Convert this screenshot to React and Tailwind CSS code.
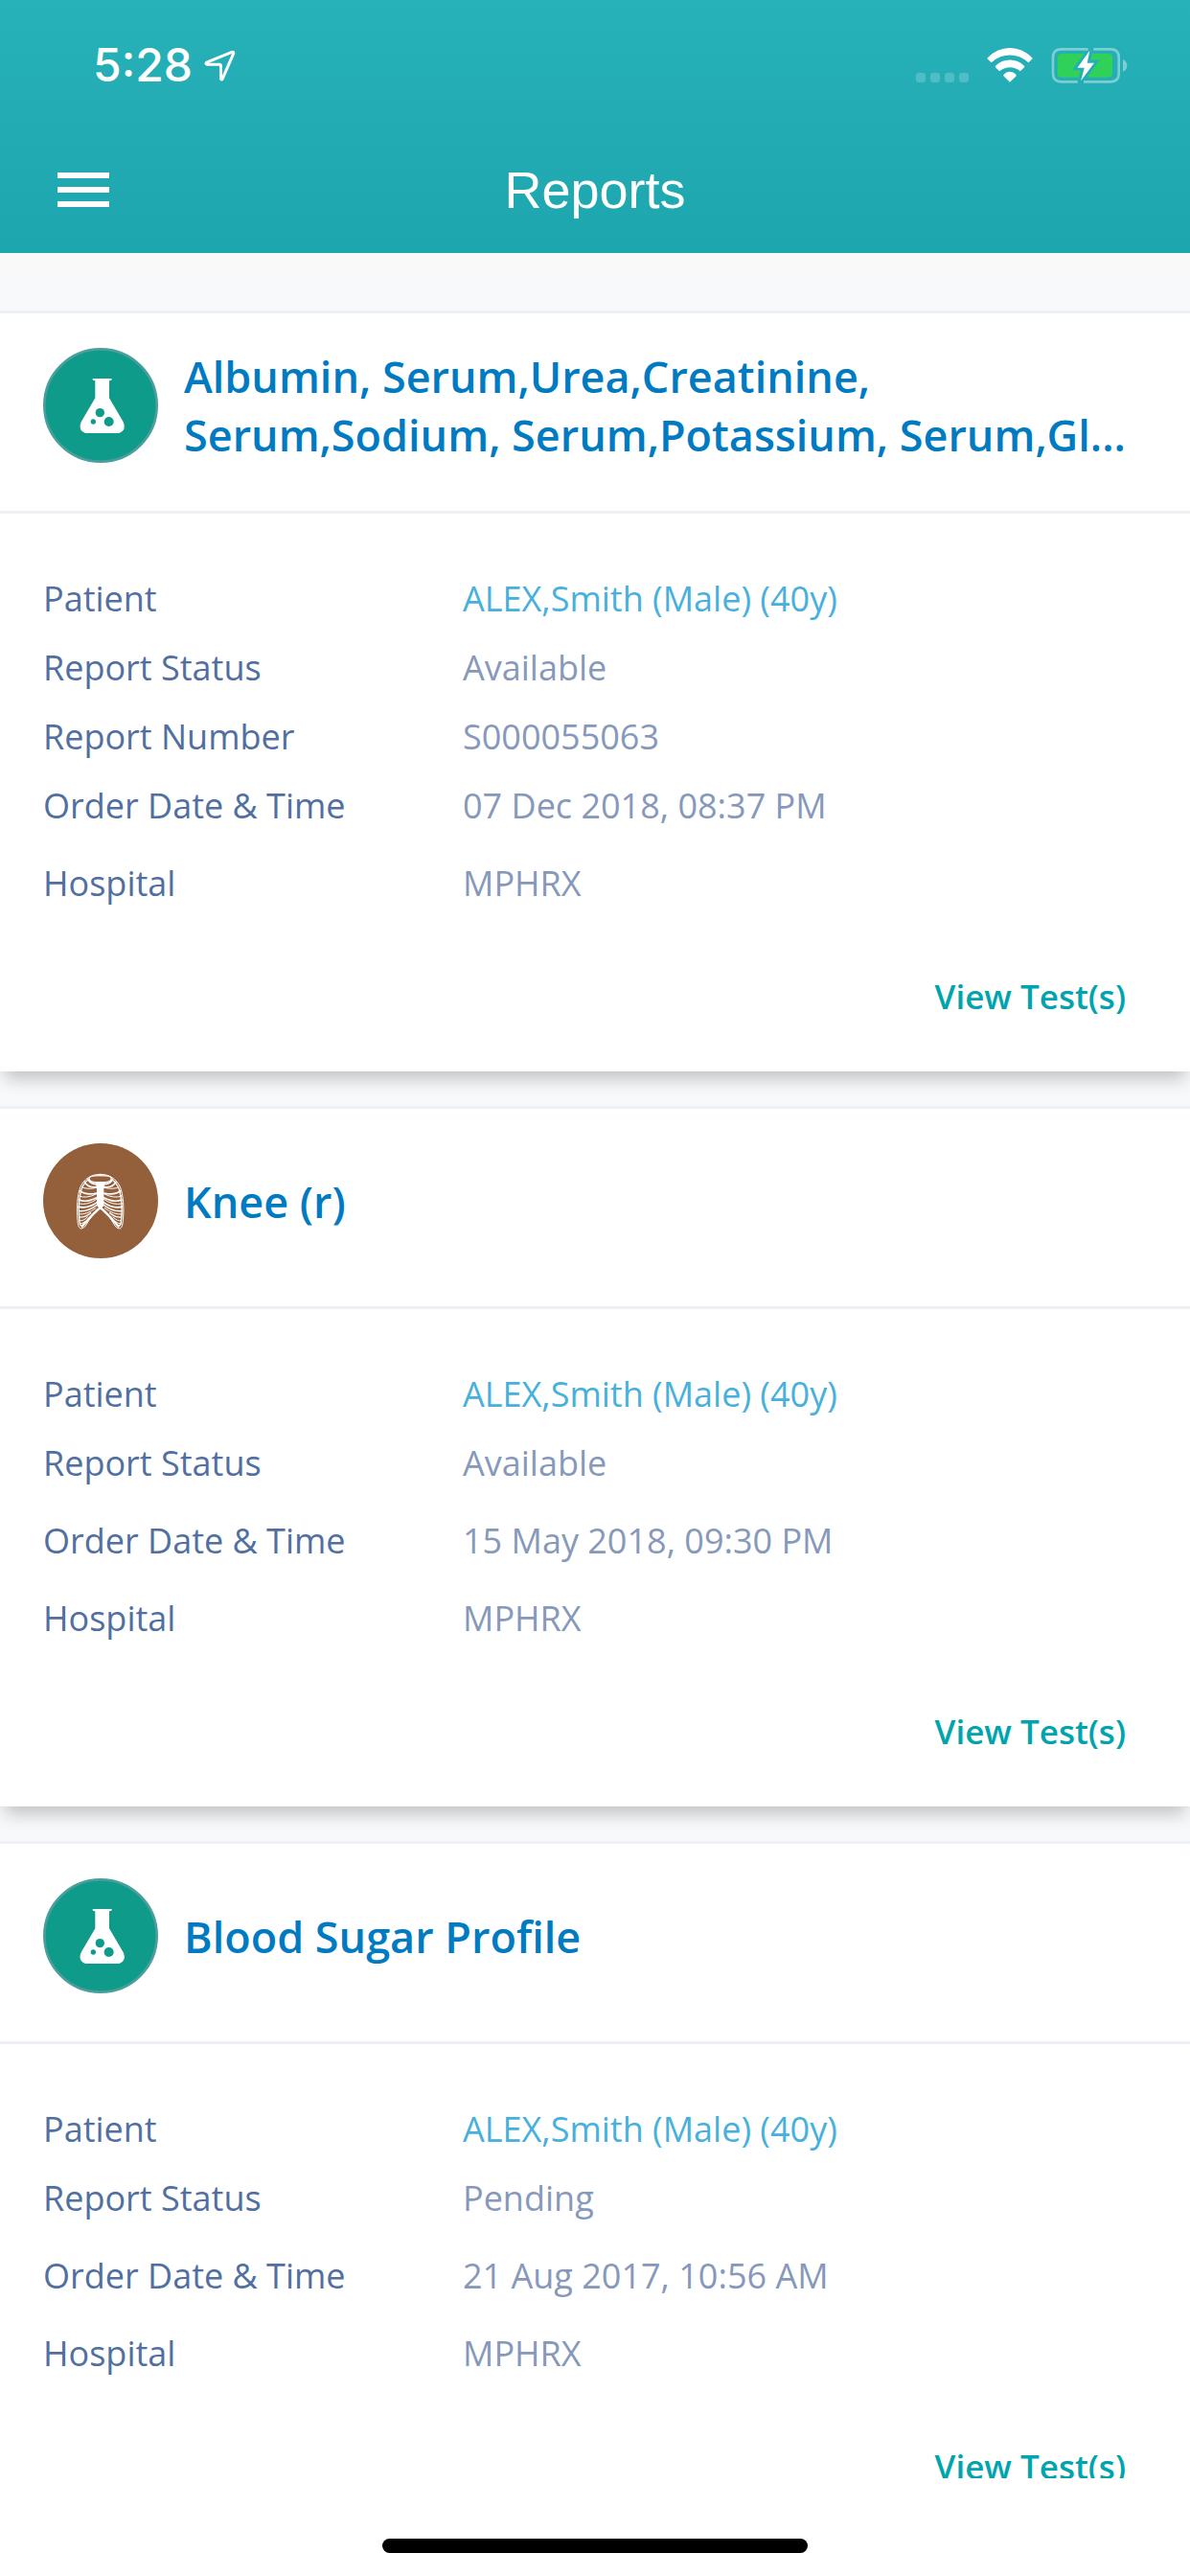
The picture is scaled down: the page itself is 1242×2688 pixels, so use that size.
import clsx from "clsx";

const reports = [
  {
    id: 1,
    type: "lab",
    title: "Albumin, Serum,Urea,Creatinine, Serum,Sodium, Serum,Potassium, Serum,Gl...",
    rows: [
      { label: "Patient", value: "ALEX,Smith (Male) (40y)", highlight: true },
      { label: "Report Status", value: "Available" },
      { label: "Report Number", value: "S000055063" },
      { label: "Order Date & Time", value: "07 Dec 2018, 08:37 PM" },
      { label: "Hospital", value: "MPHRX", spaced: true },
    ],
  },
  {
    id: 2,
    type: "radiology",
    title: "Knee (r)",
    rows: [
      { label: "Patient", value: "ALEX,Smith (Male) (40y)", highlight: true },
      { label: "Report Status", value: "Available" },
      { label: "Order Date & Time", value: "15 May 2018, 09:30 PM", spaced: true },
      { label: "Hospital", value: "MPHRX", spaced: true },
    ],
  },
  {
    id: 3,
    type: "lab",
    title: "Blood Sugar Profile",
    rows: [
      { label: "Patient", value: "ALEX,Smith (Male) (40y)", highlight: true },
      { label: "Report Status", value: "Pending" },
      { label: "Order Date & Time", value: "21 Aug 2017, 10:56 AM", spaced: true },
      { label: "Hospital", value: "MPHRX", spaced: true },
    ],
  },
];

const LocationIcon = () => (
  <svg viewBox="638 153 100 100" className="w-[33px] h-[33px]" fill="none" stroke="#fff" strokeWidth="9" strokeLinejoin="round">
    <path d="M646 193 L726 160 Q732 158 731 165 L696 245 Q692 249 691 243 V204 Q691 199 686 199 H647 Q641 197 646 193 Z" />
  </svg>
);

const WifiIcon = () => (
  <svg viewBox="395 147 143 109" className="w-12 h-9" fill="#fff">
    <path d="M396 178 Q427 147 466.500 147 T537 178 Q539 180 537 182 L527 192 Q525 194 523 192 Q498 170 466.500 170 T410 192 Q408 194 406 192 L396 182 Q394 180 396 178 Z" />
    <path d="M421 204 Q440 185 466.500 185 T512 204 Q514 206 512 208 L501 219 Q499 221 497 219 Q484 208 466.500 208 T436 219 Q434 221 432 219 L421 208 Q419 206 421 204 Z" />
    <path d="M447 231 Q455 222 466.500 222 T486 231 Q488 234 486 236 L468 254 Q466.500 256 465 254 L447 236 Q445 234 447 231 Z" />
  </svg>
);

const BatteryIcon = () => (
  <svg viewBox="594 147 238 112" className="w-20 h-[37px]" fill="none">
    <path d="M709 151 H624 Q598 151 598 177 V228 Q598 254 624 254 H676" stroke="#fff" strokeOpacity=".4" strokeWidth="8" />
    <path d="M726 151 H780 Q806 151 806 177 V228 Q806 254 780 254 H695" stroke="#fff" strokeOpacity=".4" strokeWidth="8" />
    <path d="M819 183 Q832 190 832 203 T819 222 Z" fill="#fff" fillOpacity=".4" />
    <path d="M697 165 H626 Q612 165 612 179 V226 Q612 240 626 240 H680 L685 217 H658 Z" fill="#30d158" />
    <path d="M722 165 H772 Q786 165 786 179 V226 Q786 240 772 240 H706 L745 185 H717 Z" fill="#30d158" />
    <path d="M714 155 L675 210 H697 L686 251 L728 195 H706 Z" fill="#fff" />
  </svg>
);

const FlaskIcon = () => (
  <svg viewBox="135 159 360 360" className="w-[120px] h-[120px] shrink-0">
    <circle cx="315" cy="339" r="176" fill="#0f9b8a" stroke="#4a9e9b" strokeWidth="8" />
    <path
      d="M290 255 H350 V258 Q350 262 342 262 V316 L386 391 Q397 417 373 426 H267 Q243 417 254 391 L298 316 V262 Q290 262 290 258 Z"
      fill="#fff"
    />
    <circle cx="313" cy="362" r="14" fill="#0f9b8a" />
    <circle cx="341" cy="390" r="15" fill="#0f9b8a" />
    <circle cx="292" cy="390" r="8" fill="#0f9b8a" />
  </svg>
);

// left half of the cage, drawn again mirrored for the right half
const HalfRibs = () => (
  <>
    <path d="M314 286 C286 286 264 300 252 325 C242 350 239 395 243 430 C244 445 247 456 254 456 Q262 456 268 447 C280 426 297 402 314 388" strokeWidth="3" />
    <path d="M276 303 C264 312 254 330 251 350 C245 380 246 410 249 435 Q250 449 256 446" strokeWidth="4" />
    <path d="M314 391 C298 402 274 430 257 449" strokeWidth="7" />
    <path d="M314 290 C294 290 280 292 279 299 Q280 309 292 310 L303 312" strokeWidth="4" />
    <path d="M276 303 Q284 316 304 318" strokeWidth="5" />
    <path d="M265 310 Q275 329 303 326" strokeWidth="5" />
    <path d="M256 326 Q271 335 303 328" strokeWidth="3" />
    <path d="M251 338 Q268 353 303 345" strokeWidth="5" />
    <path d="M248 354 Q269 364 303 347" strokeWidth="3" />
    <path d="M247 366 Q269 376 303 359" strokeWidth="5" />
    <path d="M246 378 Q275 384 303 364" strokeWidth="3" />
    <path d="M246 388 Q276 394 304 374" strokeWidth="5" />
    <path d="M247 401 Q276 404 305 381" strokeWidth="4" />
    <path d="M247 411 Q272 413 300 392" strokeWidth="3" />
    <path d="M248 420 Q266 422 284 407" strokeWidth="4" />
    <path d="M249 431 Q260 434 274 420" strokeWidth="3" />
    <path d="M250 441 Q258 442 266 434" strokeWidth="3" />
  </>
);

const RibsIcon = () => (
  <svg viewBox="135 189 360 360" className="w-[120px] h-[120px] shrink-0">
    <circle cx="315" cy="369" r="180" fill="#945f3b" />
    <g fill="none" stroke="#fff" strokeLinecap="round">
      <HalfRibs />
      <g transform="translate(628 0) scale(-1 1)">
        <HalfRibs />
      </g>
    </g>
    <path d="M298 309 H330 L325 328 V384 L314 396 L303 384 V328 Z" fill="#fff" />
  </svg>
);

const StatusBar = () => (
  <div className="flex items-center justify-between h-[132px] pt-1 pl-[97px] pr-[65px]">
    <div className="flex items-center gap-3">
      <span className="font-['Inter'] text-5xl font-medium">5:28</span>
      <LocationIcon />
    </div>
    <div className="flex items-center gap-[19px]">
      <div className="flex items-end gap-[5px] h-9">
        <span className="size-[10px] rounded-[3px] bg-white/20" />
        <span className="size-[10px] rounded-[3px] bg-white/20" />
        <span className="size-[10px] rounded-[3px] bg-white/20" />
        <span className="size-[10px] rounded-[3px] bg-white/20" />
      </div>
      <WifiIcon />
      <BatteryIcon />
    </div>
  </div>
);

const NavBar = () => (
  <div className="grid grid-cols-[1fr_auto_1fr] items-center h-[132px] px-[60px]">
    <button type="button" aria-label="Menu" className="flex flex-col gap-[9px] w-[54px]">
      <span className="h-[6px] w-full bg-white" />
      <span className="h-[6px] w-full bg-white" />
      <span className="h-[6px] w-full bg-white" />
    </button>
    <h1 className="font-['Liberation_Sans'] text-[54px]">Reports</h1>
  </div>
);

const ReportCard = ({ report }) => (
  <article className="bg-white border-t-[3px] border-[#edf0f4] shadow-[0_12px_18px_-5px_rgba(0,0,0,0.24)]">
    <div className="flex items-center gap-[27px] min-h-[209px] pt-[35px] pb-[49px] pl-[45px] pr-[60px] border-b-[3px] border-[#edf0f4]">
      {report.type === "lab" ? <FlaskIcon /> : <RibsIcon />}
      <h2 className="text-[45px] leading-[61px] font-semibold text-[#007ac1] line-clamp-2">{report.title}</h2>
    </div>

    <div className="pt-[53px] pb-[54px] px-[45px]">
      <dl className="text-4xl leading-[72px]">
        {report.rows.map((row) => (
          <div key={row.label} className={clsx("flex", row.spaced && "mt-[9px]")}>
            <dt className="w-[438px] shrink-0 text-[#516fa0]">{row.label}</dt>
            <dd className={row.highlight ? "text-[#47b0dc]" : "text-[#8799bb]"}>{row.value}</dd>
          </div>
        ))}
      </dl>
      <div className="flex justify-end mt-[57px] pr-[22px]">
        <button type="button" className="text-[35px] leading-[49px] font-semibold text-[#00a4ae]">
          View Test(s)
        </button>
      </div>
    </div>
  </article>
);

const App = () => {
  return (
    <div className="flex flex-col h-screen bg-white font-['Open_Sans',sans-serif]">
      <header className="shrink-0 text-white bg-linear-to-b from-[#27b1b9] to-[#1ea6ae]">
        <StatusBar />
        <NavBar />
      </header>

      <main className="flex-1 min-h-0 overflow-x-hidden overflow-y-auto [scrollbar-width:none] bg-[#f8f9fb]">
        <div className="h-[30px] bg-[#f9f9f9]" />
        <div className="flex flex-col gap-9 pt-[30px]">
          {reports.map((report) => (
            <ReportCard key={report.id} report={report} />
          ))}
        </div>
      </main>

      <footer className="shrink-0 flex justify-center items-end h-[102px] pb-6">
        <span className="w-[444px] h-[15px] rounded-full bg-black" />
      </footer>
    </div>
  );
};

export default App;
